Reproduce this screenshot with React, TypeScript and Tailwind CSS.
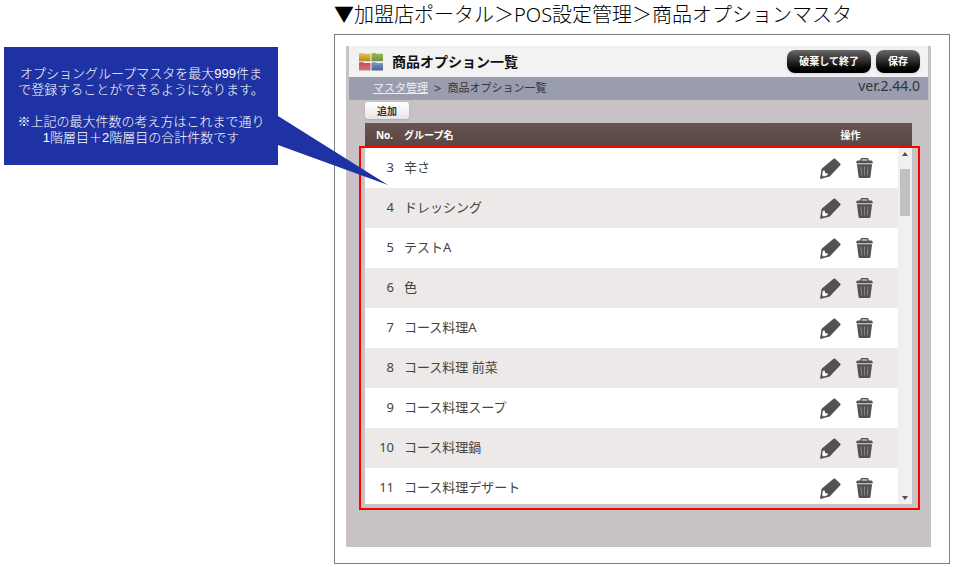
interface OptionGroup {
  no: number
  name: string
}

const GROUPS: OptionGroup[] = [
  { no: 3, name: '辛さ' },
  { no: 4, name: 'ドレッシング' },
  { no: 5, name: 'テストA' },
  { no: 6, name: '色' },
  { no: 7, name: 'コース料理A' },
  { no: 8, name: 'コース料理 前菜' },
  { no: 9, name: 'コース料理スープ' },
  { no: 10, name: 'コース料理鍋' },
  { no: 11, name: 'コース料理デザート' },
]

function FoldersIcon() {
  const folders = [
    { id: 'yellow', x: 0, y: 0, from: '#e6c653', to: '#b08a1c' },
    { id: 'green', x: 12.5, y: 0, from: '#9dbd55', to: '#6f8f48' },
    { id: 'red', x: 0, y: 9.2, from: '#c4484f', to: '#d3787c' },
    { id: 'blue', x: 12.5, y: 9.2, from: '#7f98c2', to: '#4a6596' },
  ]
  return (
    <svg className="w-6 h-[18px] shrink-0" viewBox="0 0 24 18" aria-hidden="true">
      {folders.map(f => (
        <g key={f.id} transform={`translate(${f.x} ${f.y})`}>
          <linearGradient id={f.id} x1="0" y1="0" x2="0" y2="1">
            <stop offset="0" stopColor={f.from} />
            <stop offset="1" stopColor={f.to} />
          </linearGradient>
          <path d="M0 .6Q0 0 .6 0H4l1 .8h6q.5 0 .5.6V8.300H0z" fill={`url(#${f.id})`} />
        </g>
      ))}
    </svg>
  )
}

function PencilIcon() {
  return (
    <svg className="w-[22px] h-[22px]" viewBox="0 0 22 22" aria-hidden="true">
      <path d="M14.600 1.800Q15.400 1 16.200 1.800L21.300 6.800Q22 7.500 21.300 8.200L10.700 19.500L1 22L2.600 11.800z" fill="#525252" />
      <path d="M3.900 13.700L5.600 13.400L6.300 16L9 16.800L8.500 18.200L4.600 19.400L3.100 18z" fill="#fff" />
    </svg>
  )
}

function TrashIcon() {
  return (
    <svg className="w-[17px] h-5" viewBox="0 0 17 20" aria-hidden="true">
      <path d="M5 3V1.500Q5 .7 5.800.7h5.400q.8 0 .8.8V3" fill="none" stroke="#525252" strokeWidth="1.400" />
      <path d="M1.700 2.500h13.600q1.400 0 1.400 1.800v.9H.3v-.9q0-1.800 1.400-1.800z" fill="#525252" />
      <path d="M.3 5.200h16.400v1.100H.3z" fill="#b5b5b5" />
      <path d="M1 6.300h15l-1.500 12.400q-.2 1.300-1.400 1.300H3.900q-1.200 0-1.400-1.300z" fill="#525252" />
      <path d="M5 8.500l.7 9M8.500 8.500v9M12 8.500l-.7 9" stroke="#858585" strokeWidth="1" />
    </svg>
  )
}

function Callout() {
  return (
    <aside className="relative z-20 w-[274px] shrink-0 mt-[47px] bg-[#1f32a3] text-white text-[13px] leading-4 text-center py-[19px] font-['Liberation_Sans','Noto_Sans_CJK_JP',sans-serif] font-light">
      <p>
        オプショングループマスタを最大999件ま
        <br />
        で登録することができるようになります。
      </p>
      <p className="mt-4">
        ※上記の最大件数の考え方はこれまで通り
        <br />
        1階層目＋2階層目の合計件数です
      </p>
      {/* 吹き出しのしっぽ */}
      <svg className="absolute left-full top-[69px] w-[110px] h-[69px]" viewBox="0 0 110 69" aria-hidden="true">
        <path d="M-1 0L0 0L110 69L0 29L-1 29z" fill="#1f32a3" />
      </svg>
    </aside>
  )
}

function GroupTable() {
  return (
    <div className="relative mt-1">
      <div className="h-[381px] overflow-hidden">
        <table className="w-full table-fixed border-collapse text-[13px] text-[#444]">
          <thead>
            <tr className="h-[25px] bg-gradient-to-b from-[#685350] to-[#584642] text-white text-[10px] font-bold">
              <th className="w-[39px] text-center">No.</th>
              <th className="text-left">グループ名</th>
              <th className="w-[79px] pr-4 text-center">操作</th>
              <th className="w-[14px]" aria-hidden="true" />
            </tr>
          </thead>
          <tbody>
            {GROUPS.map(g => (
              <tr key={g.no} className="h-10 bg-white even:bg-[#ece9e8]">
                <td className="pr-[10px] text-right">{g.no}</td>
                <td>{g.name}</td>
                <td>
                  <div className="flex items-center gap-[15px]">
                    <button type="button" aria-label="編集">
                      <PencilIcon />
                    </button>
                    <button type="button" aria-label="削除">
                      <TrashIcon />
                    </button>
                  </div>
                </td>
                <td className="bg-[#f0f0f0]" />
              </tr>
            ))}
          </tbody>
        </table>
      </div>

      {/* スクロールバー */}
      <div className="absolute right-0 top-[25px] bottom-0 w-[14px] bg-[#f0f0f0] flex flex-col items-center py-1">
        <svg className="w-[6px] h-[4px]" viewBox="0 0 6 4" aria-hidden="true">
          <path d="M0 4L3 0L6 4z" fill="#505050" />
        </svg>
        <div className="mt-[13px] w-[10px] h-[47px] bg-[#c1c1c1]" />
        <svg className="mt-auto w-[6px] h-[4px]" viewBox="0 0 6 4" aria-hidden="true">
          <path d="M0 0L3 4L6 0z" fill="#505050" />
        </svg>
      </div>

      {/* 強調枠 */}
      <div className="absolute -left-1.5 -right-2 top-[23px] -bottom-1.5 border-2 border-[#ff0000] pointer-events-none" />
    </div>
  )
}

export default function App() {
  return (
    <div className="flex items-start pl-1 pr-1.5 bg-white font-['Noto_Sans','Noto_Sans_CJK_JP',sans-serif]">
      <Callout />

      <main className="ml-14 flex-1 min-w-0">
        <h1 className="h-[34px] text-xl leading-[30px] font-light text-black whitespace-nowrap">
          ▼加盟店ポータル＞POS設定管理＞商品オプションマスタ
        </h1>

        <div className="border border-[#7f7f7f] pt-[11px] pb-4 pl-[11px] pr-[18px]">
          <div className="bg-[#c8c1c6] px-[3px] pb-[43px]">
            <header className="h-[31px] bg-[#f2f2f2] pl-[10px] pr-2 flex items-center gap-[9px]">
              <FoldersIcon />
              <h2 className="text-sm font-bold text-[#111]">商品オプション一覧</h2>
              <div className="ml-auto flex gap-[5px] text-[10px] font-bold text-white">
                <button type="button" className="h-[23px] px-3 rounded-lg bg-gradient-to-b from-[#6a6a6a] via-[#2a2828] to-black shadow">
                  破棄して終了
                </button>
                <button type="button" className="h-[23px] px-3 rounded-lg bg-gradient-to-b from-[#6a6a6a] via-[#2a2828] to-black shadow">
                  保存
                </button>
              </div>
            </header>

            <nav className="h-[23px] bg-[#999dae] pl-6 pr-2 flex items-center text-[11px] text-[#33333b]">
              <a href="#master" className="text-[#eeeef4] underline">マスタ管理</a>
              <span className="mx-1.5 text-[13px]">&gt;</span>
              <span>商品オプション一覧</span>
              <span className="ml-auto self-start text-sm leading-[18px]">ver.2.44.0</span>
            </nav>

            <div className="pt-0.5 px-4">
              <button
                type="button"
                className="block h-[17px] w-11 rounded-[3px] bg-gradient-to-b from-white to-[#e6e6e6] text-[10px] leading-4 font-bold text-[#333] shadow"
              >
                追加
              </button>
              <GroupTable />
            </div>
          </div>
        </div>
      </main>
    </div>
  )
}
